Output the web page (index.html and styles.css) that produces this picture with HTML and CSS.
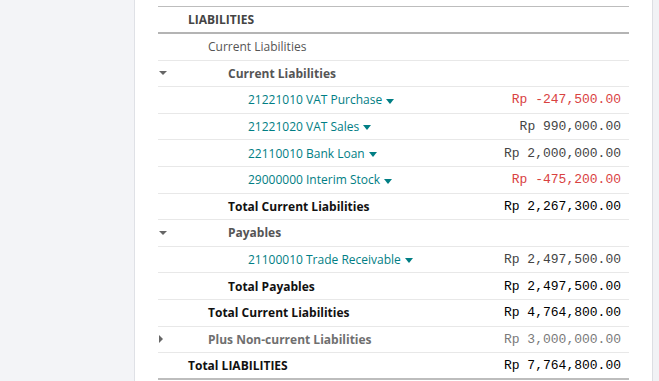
FILE: index.html
```html
<!DOCTYPE html>
<html lang="en">
<head>
  <meta charset="UTF-8">
  <title>Balance Sheet</title>
  <link rel="stylesheet" href="styles.css">
</head>
<body>
  <div class="sidebar"></div>

  <div class="report">
    <div class="lines">
      <!-- section header -->
      <div class="row head">
        <span class="fold"></span>
        <span class="name lvl-0">LIABILITIES</span>
        <span class="amount"></span>
      </div>

      <div class="row">
        <span class="fold"></span>
        <span class="name lvl-1 plain">Current Liabilities</span>
        <span class="amount"></span>
      </div>

      <div class="row group">
        <span class="fold"><i class="caret down"></i></span>
        <span class="name lvl-2">Current Liabilities</span>
        <span class="amount"></span>
      </div>
      <div class="row account">
        <span class="fold"></span>
        <span class="name lvl-3">21221010 VAT Purchase <i class="caret teal"></i></span>
        <span class="amount neg">Rp -247,500.00</span>
      </div>
      <div class="row account">
        <span class="fold"></span>
        <span class="name lvl-3">21221020 VAT Sales <i class="caret teal"></i></span>
        <span class="amount">Rp 990,000.00</span>
      </div>
      <div class="row account">
        <span class="fold"></span>
        <span class="name lvl-3">22110010 Bank Loan <i class="caret teal"></i></span>
        <span class="amount">Rp 2,000,000.00</span>
      </div>
      <div class="row account">
        <span class="fold"></span>
        <span class="name lvl-3">29000000 Interim Stock <i class="caret teal"></i></span>
        <span class="amount neg">Rp -475,200.00</span>
      </div>
      <div class="row total">
        <span class="fold"></span>
        <span class="name lvl-2">Total Current Liabilities</span>
        <span class="amount">Rp 2,267,300.00</span>
      </div>

      <div class="row group">
        <span class="fold"><i class="caret down"></i></span>
        <span class="name lvl-2">Payables</span>
        <span class="amount"></span>
      </div>
      <div class="row account">
        <span class="fold"></span>
        <span class="name lvl-3">21100010 Trade Receivable <i class="caret teal"></i></span>
        <span class="amount">Rp 2,497,500.00</span>
      </div>
      <div class="row total">
        <span class="fold"></span>
        <span class="name lvl-2">Total Payables</span>
        <span class="amount">Rp 2,497,500.00</span>
      </div>

      <div class="row total">
        <span class="fold"></span>
        <span class="name lvl-1">Total Current Liabilities</span>
        <span class="amount">Rp 4,764,800.00</span>
      </div>
      <div class="row group folded">
        <span class="fold"><i class="caret right"></i></span>
        <span class="name lvl-1">Plus Non-current Liabilities</span>
        <span class="amount">Rp 3,000,000.00</span>
      </div>
      <div class="row total last">
        <span class="fold"></span>
        <span class="name lvl-0">Total LIABILITIES</span>
        <span class="amount">Rp 7,764,800.00</span>
      </div>
    </div>
  </div>

  <div class="scroll-edge"></div>
</body>
</html>
```

FILE: styles.css
```css
/* page frame: grey side panel, white report, thin right strip */
body {
  margin: 0;
  height: 100vh;
  display: flex;
  background: #fff;
  font-family: "Open Sans", "Noto Sans", Arial, sans-serif;
  font-size: 12px;
  color: #555;
  overflow: hidden;
}
.sidebar {
  width: 134px;
  flex: none;
  background: #f3f4f7;
  border-right: 1px solid #dfe1e6;
}
.report {
  flex: 1;
  padding: 6px 23px 0 23px;
}
.scroll-edge {
  width: 6px;
  flex: none;
  background: #f1f2f5;
  border-left: 1px solid #dcdee3;
}

/* report lines */
.lines {
  border-top: 1px solid #bdbdbd;
}
.row {
  display: flex;
  align-items: center;
  height: 26.6px;
  box-sizing: border-box;
  border-bottom: 1px solid #e8e8e8;
}
.row.head {
  height: 27px;
  border-bottom: 2px solid #b4b4b4;
  font-weight: bold;
  color: #444;
}
.row.last {
  border-bottom: 2px solid #bdbdbd;
}
.fold {
  width: 30px;
  flex: none;
  padding-left: 1px;
  box-sizing: border-box;
  display: flex;
  align-items: center;
}
.name {
  flex: 1;
  white-space: nowrap;
}
.lvl-0 { padding-left: 0; }
.lvl-1 { padding-left: 20px; }
.lvl-2 { padding-left: 40px; }
.lvl-3 { padding-left: 60px; }

.group {
  font-weight: bold;
  color: #555;
}
.group.folded {
  color: #6f6f6f;
}
.total {
  font-weight: bold;
  color: #111;
}
.account .name {
  color: #017e84;
}

.amount {
  padding-right: 8px;
  font-family: "Liberation Mono", "Courier New", monospace;
  font-size: 13px;
  font-weight: normal;
  color: #444;
  white-space: pre;
}
.amount.neg { color: #d9423f; }
.total .amount { color: #000; }
.folded .amount { color: #7a7a7a; }

/* small triangles */
.caret {
  display: inline-block;
  width: 0;
  height: 0;
  vertical-align: middle;
}
.caret.down {
  border-left: 4px solid transparent;
  border-right: 4px solid transparent;
  border-top: 4px solid #666;
}
.caret.right {
  border-top: 4px solid transparent;
  border-bottom: 4px solid transparent;
  border-left: 4px solid #666;
}
.caret.teal {
  margin-left: 1px;
  border-left: 4px solid transparent;
  border-right: 4px solid transparent;
  border-top: 5px solid #017e84;
}
```
